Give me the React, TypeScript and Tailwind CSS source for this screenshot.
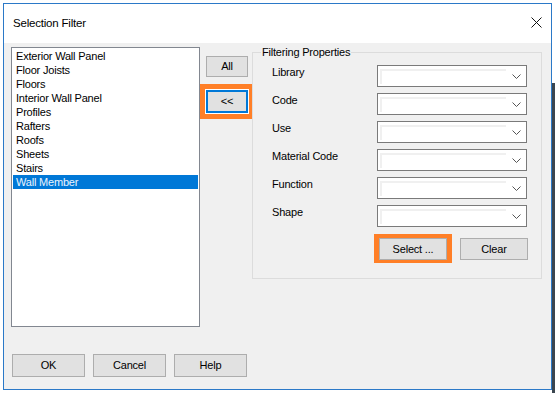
import React from "react";

const items = [
  "Exterior Wall Panel",
  "Floor Joists",
  "Floors",
  "Interior Wall Panel",
  "Profiles",
  "Rafters",
  "Roofs",
  "Sheets",
  "Stairs",
  "Wall Member",
];

const props = ["Library", "Code", "Use", "Material Code", "Function", "Shape"];

const font = { fontFamily: '"Liberation Sans", Arial, sans-serif' };

function Combo() {
  return (
    <div className="flex h-[22px] w-[150px] border border-[#7a7a7a] bg-white pl-[2px] pt-[3px] pb-[2px]">
      <div className="flex-1 border-l-2 border-t-2 border-[#f0f0f0]" />
      <div className="flex w-[20px] items-center justify-center">
        <svg width="9" height="5" viewBox="0 0 9 5">
          <polyline points="0.5,0.5 4.5,4.5 8.5,0.5" fill="none" stroke="#555" strokeWidth="1" />
        </svg>
      </div>
    </div>
  );
}

function Btn({ label, className = "" }: { label: string; className?: string }) {
  return (
    <div
      className={`flex items-center justify-center border border-[#adadad] bg-[#e1e1e1] text-[11px] text-black ${className}`}
    >
      {label}
    </div>
  );
}

export default function App() {
  return (
    <div className="flex h-[394px] w-[555px] bg-white pl-[3px] pt-[3px] tracking-[-0.2px]" style={font}>
      <div className="flex h-[387px] w-[549px] flex-col border border-[#2b79c8]">
        {/* Title bar */}
        <div className="flex h-[39px] items-center justify-between bg-white pl-[9px] pr-[9px]">
          <span className="text-[11.5px] text-black">Selection Filter</span>
          <svg width="11" height="11" viewBox="0 0 11 11" className="mr-[0px] mt-[-2px]">
            <line x1="0.5" y1="0.5" x2="10.5" y2="10.5" stroke="#111" strokeWidth="1" />
            <line x1="10.5" y1="0.5" x2="0.5" y2="10.5" stroke="#111" strokeWidth="1" />
          </svg>
        </div>
        {/* Body */}
        <div className="flex flex-1 flex-col bg-[#f0f0f0] pl-[7px] pt-[4px]">
          <div className="flex items-start">
            {/* List */}
            <div className="h-[280px] w-[189px] border border-[#828790] bg-white pl-[1px] pr-[1px] pt-[1px]">
              {items.map((it) => (
                <div
                  key={it}
                  className={`h-[14px] pl-[3px] text-[11px] leading-[14px] ${
                    it === "Wall Member" ? "bg-[#0078d7] text-[#eaf4ff]" : "text-black"
                  }`}
                >
                  {it}
                </div>
              ))}
            </div>
            {/* middle buttons */}
            <div className="ml-[6px] flex w-[42px] flex-col">
              <Btn label="All" className="mt-[9px] h-[21px] w-[42px]" />
              <div className="relative mt-[13px] h-[23px] w-[42px]">
                <div className="absolute left-[-6px] top-[-6px] h-[35px] w-[52px] bg-[#ff7f27]" />
                <div className="absolute inset-[-1px] bg-white" />
                <div className="absolute inset-0 flex items-center justify-center border-2 border-[#0078d7] bg-[#e1e1e1] text-[11px]">
                  &lt;&lt;
                </div>
              </div>
            </div>
            {/* Group box */}
            <div className="relative ml-[4px] mt-[5px] h-[227px] w-[290px] border border-[#dcdcdc] pl-[19px] pt-[12px]">
              <span className="absolute left-[8px] top-[-7px] bg-[#f0f0f0] px-[1px] text-[11px] leading-[13px] text-black">
                Filtering Properties
              </span>
              <div className="flex flex-col gap-[6px]">
                {props.map((p) => (
                  <div key={p} className="flex items-start">
                    <div className="w-[105px] pt-[1px] text-[11px] leading-[13px] text-black">{p}</div>
                    <Combo />
                  </div>
                ))}
              </div>
              <div className="mt-[11px] flex pl-[107px]">
                <div className="relative h-[22px] w-[68px]">
                  <div className="absolute left-[-5px] top-[-4px] h-[29px] w-[78px] bg-[#ff7f27]" />
                  <Btn label="Select ..." className="absolute inset-0" />
                </div>
                <Btn label="Clear" className="ml-[13px] h-[22px] w-[68px]" />
              </div>
            </div>
          </div>
          {/* Bottom buttons */}
          <div className="mt-[27px] flex gap-[8px] pl-[1px]">
            <Btn label="OK" className="h-[23px] w-[73px]" />
            <Btn label="Cancel" className="h-[23px] w-[73px]" />
            <Btn label="Help" className="h-[23px] w-[73px]" />
          </div>
        </div>
      </div>
      <div className="mt-[80px] h-[310px] w-[3px] bg-[#3b4650]" />
    </div>
  );
}
